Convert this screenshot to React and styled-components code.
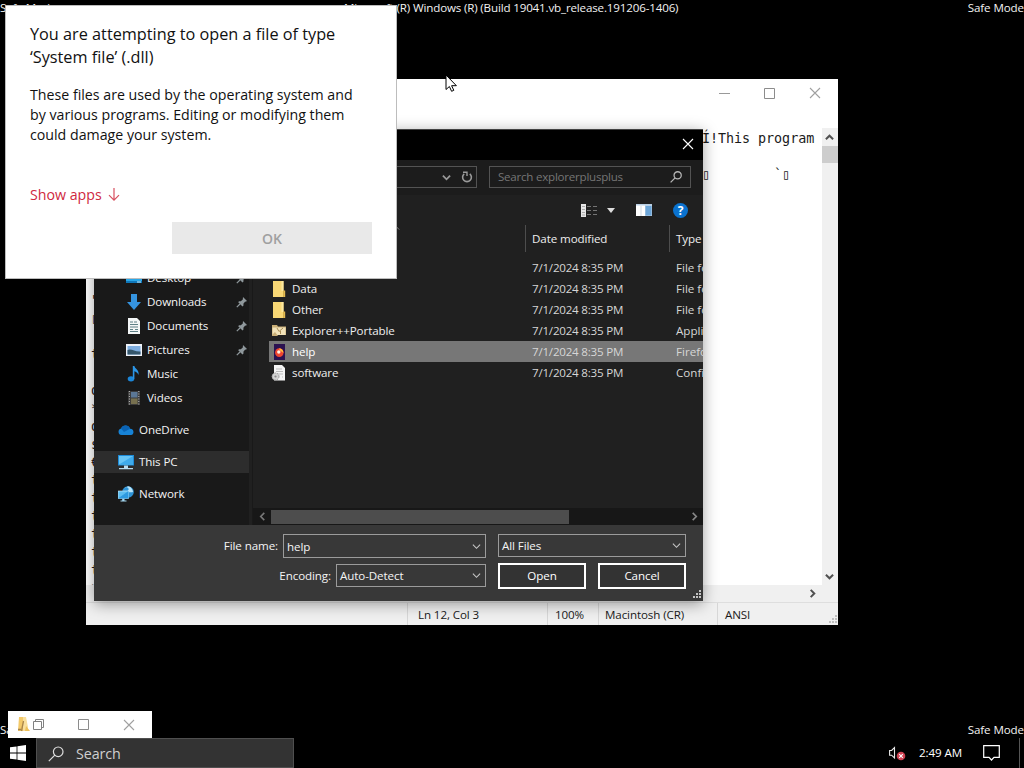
import styled, { createGlobalStyle } from 'styled-components';

const GlobalStyle = createGlobalStyle`
  * {
    box-sizing: border-box;
  }

  body {
    margin: 0;
    background: #000;
    font-family: 'Open Sans', 'Noto Sans', sans-serif;
    font-size: 11.6px;
    line-height: 16px;
    letter-spacing: -0.1px;
    overflow: hidden;
  }

  svg {
    display: block;
    flex: none;
  }
`;

const FILES = [
  { name: 'App', type: 'File folder', icon: 'folder' },
  { name: 'Data', type: 'File folder', icon: 'folder' },
  { name: 'Other', type: 'File folder', icon: 'folder' },
  { name: 'Explorer++Portable', type: 'Application', icon: 'portable' },
  { name: 'help', type: 'Firefox HTML', icon: 'firefox', selected: true },
  { name: 'software', type: 'Configuration', icon: 'config' },
];

const QUICK_ACCESS = [
  { name: 'Desktop', icon: 'desktop', pinned: true },
  { name: 'Downloads', icon: 'downloads', pinned: true },
  { name: 'Documents', icon: 'documents', pinned: true },
  { name: 'Pictures', icon: 'pictures', pinned: true },
  { name: 'Music', icon: 'music' },
  { name: 'Videos', icon: 'videos' },
];

const ROOTS = [
  { name: 'OneDrive', icon: 'onedrive' },
  { name: 'This PC', icon: 'pc', active: true },
  { name: 'Network', icon: 'network' },
];

// line starts and line ends of the opened binary, either side of the dialog
const LINE_STARTS = [
  '', '', '', '', '', '', '', '', '`', '"', '▯', '', 't', '', 'd', '*', 'd', 's', '€',
  't', 't', 't', 't', 't', 't', '*',
];
const LINE_ENDS = ['Í!This program', '', '▯        `▯'];

/* ---------- icons ---------- */

const ICONS = {
  folder: (
    <svg width="16" height="16" viewBox="0 0 16 16">
      <path d="M2 0h10.5v16H2z" fill="#f8d775" />
      <path d="M10.5 0h2v10h-2z" fill="#fde9a0" />
      <path d="M12.2 9.5h2V16h-2z" fill="#e5bb4f" />
    </svg>
  ),
  portable: (
    <svg width="16" height="16" viewBox="0 0 16 16">
      <path d="M1 2h5l1 1.500h8V12H1z" fill="#c9ae76" />
      <path d="M1.500 4.500h13V12h-13z" fill="#f1e2b9" />
      <path d="M6 5l2 3.500L12 5M9.500 8v3" stroke="#a88d58" fill="none" />
      <path d="M1 12l3-3 3 4H1z" fill="#c9ae76" />
    </svg>
  ),
  firefox: (
    <svg width="16" height="16" viewBox="0 0 16 16">
      <path d="M3 0h11v16H3z" fill="#2b1150" />
      <circle cx="8.3" cy="8.6" r="4.3" fill="#f0442f" />
      <path d="M8 4.5c2.5-.4 4.8 2 4.3 4.6C11 7 9 7.5 8 4.5z" fill="#ffbd3d" />
      <circle cx="7.8" cy="8" r="1.7" fill="#fff1e6" />
    </svg>
  ),
  config: (
    <svg width="16" height="16" viewBox="0 0 16 16">
      <path d="M3 0h8l3 3v12.500H3z" fill="#f4f4f4" />
      <path d="M5 4h6M5 6.5h7M5 9h7M11 12h1" stroke="#bbb" />
      <circle cx="4.500" cy="11.500" r="3.500" fill="#d2d2d2" stroke="#999" strokeDasharray="1.5 1" />
      <circle cx="4.500" cy="11.500" r="1.1" fill="#888" />
    </svg>
  ),
  desktop: (
    <svg width="16" height="16" viewBox="0 0 16 16">
      <path d="M0 2h16v11H0z" fill="#2aa7e8" />
      <path d="M0 11h16v2H0z" fill="#0f76b8" />
      <path d="M11 12h4" stroke="#cdefff" />
    </svg>
  ),
  downloads: (
    <svg width="16" height="16" viewBox="0 0 16 16">
      <path d="M5 0h6v8h4l-7 8-7-8h4z" fill="#3594e0" />
    </svg>
  ),
  documents: (
    <svg width="16" height="16" viewBox="0 0 16 16">
      <path d="M2 0h9l3 3v13H2z" fill="#f3f6f7" />
      <path d="M4 4h3M8 4h3M4 6.5h8M4 9h8M4 11.5h3M9 11.5h3M4 13.5h8" stroke="#5e7f86" />
    </svg>
  ),
  pictures: (
    <svg width="16" height="16" viewBox="0 0 16 16">
      <path d="M0 2h16v12H0z" fill="#eef2f8" />
      <path d="M1.5 4h13v8.5h-13z" fill="#7eaee0" />
      <path d="M1.5 8c4-2 7 2 13 1.5v3h-13z" fill="#35566b" />
    </svg>
  ),
  music: (
    <svg width="16" height="16" viewBox="0 0 16 16">
      <ellipse cx="5" cy="12.8" rx="3.3" ry="2.6" fill="#1c86d8" />
      <path d="M6.8 0h1.6c.4 3 5.4 4 4 9-.6-2.4-2.4-3.4-4-3.8v7.6H6.8z" fill="#2b95e6" />
    </svg>
  ),
  videos: (
    <svg width="16" height="16" viewBox="0 0 16 16">
      <path d="M2 1h12v14H2z" fill="#3c3c3c" />
      <path d="M5 2h6.5v5.5H5z" fill="#5b7795" />
      <path d="M5 8.5h6.5V14H5z" fill="#77704f" />
      <path d="M3.4 1v14M12.8 1v14" stroke="#bbb" strokeDasharray="1 1.5" />
    </svg>
  ),
  onedrive: (
    <svg width="16" height="16" viewBox="0 0 16 16">
      <path d="M3.5 13a3.3 3.3 0 0 1-.4-6.5A4.8 4.8 0 0 1 12 6.7a3.2 3.2 0 0 1 1 6.3z" fill="#1783d6" />
      <path d="M3 6.6A4.8 4.8 0 0 1 12 6.7L6 10z" fill="#0a63b4" />
    </svg>
  ),
  pc: (
    <svg width="16" height="16" viewBox="0 0 16 16">
      <path d="M0 1h16v10.5H0z" fill="#1d8bd8" />
      <path d="M1 2h14v8.5H1z" fill="#69c5f5" />
      <path d="M1 10.5 15 2v8.5z" fill="#3fabec" />
      <path d="M6 11.5h4V14H6zM1 14h14v1.3H1z" fill="#b8dcf0" />
    </svg>
  ),
  network: (
    <svg width="16" height="16" viewBox="0 0 16 16">
      <circle cx="10" cy="6" r="5.8" fill="#2d93d6" />
      <path d="M6 2.5c3-3 6 0 4 2s3 2 5 1.5C15 3 12 0 10 .2z" fill="#b9e4f8" />
      <path d="M0 5h10.5v7.5H0z" fill="#5cbdf0" stroke="#d7f1fc" strokeWidth=".6" />
      <path d="M4.2 12.5h2.3V15H4.2zM2.5 14.5h6v1h-6z" fill="#a5d9f3" />
      <path d="M0 12.5 10.5 5v7.5z" fill="#2e9ae0" />
    </svg>
  ),
};

const PinIcon = (
  <svg width="12" height="12" viewBox="0 0 12 12">
    <path d="M7 1l4 4-1 .6-1 .2-1.6 2 .1 1.8-1 .8L2.200 6.200l.8-1 1.800.1 2-1.700.1-1.600z" fill="#8f989c" />
    <path d="M4 8 .8 11.200" stroke="#8f989c" strokeWidth="1.200" />
  </svg>
);

const Chevron = ({ dir = 'down', size = 9, width = 1.2, color = '#c8c8c8' }) => {
  const paths = {
    down: 'M1 3l4 4 4-4',
    up: 'M1 7l4-4 4 4',
    left: 'M7 1L3 5l4 4',
    right: 'M3 1l4 4-4 4',
  };
  return (
    <svg width={size} height={size} viewBox="0 0 10 10">
      <path d={paths[dir]} fill="none" stroke={color} strokeWidth={width} />
    </svg>
  );
};

const CloseIcon = ({ color = '#a0a0a0', size = 12 }) => (
  <svg width={size} height={size} viewBox="0 0 12 12">
    <path d="M1 1l10 10M11 1L1 11" stroke={color} strokeWidth="1.1" />
  </svg>
);

const MaximizeIcon = (
  <svg width="11" height="11" viewBox="0 0 11 11">
    <path d="M.5.5h10v10H.5z" fill="none" stroke="#8c8c8c" />
  </svg>
);

const MinimizeIcon = (
  <svg width="11" height="11" viewBox="0 0 11 11">
    <path d="M0 5.500h11" stroke="#999" />
  </svg>
);

const RestoreIcon = (
  <svg width="11" height="11" viewBox="0 0 11 11">
    <path d="M.5 2.500h8v8h-8zM2.500 2.500v-2h8v8h-2" fill="none" stroke="#808080" />
  </svg>
);

const RefreshIcon = (
  <svg width="12" height="12" viewBox="0 0 12 12">
    <path d="M3.200 2.800A4.400 4.400 0 1 0 8.800 2.800" fill="none" stroke="#999" strokeWidth="1.600" />
    <path d="M2 1.200h4v3.800" fill="none" stroke="#999" strokeWidth="1.400" />
  </svg>
);

const SearchIcon = ({ size, color, width = 1 }) => (
  <svg width={size} height={size} viewBox="0 0 16 16">
    <circle cx="10.200" cy="5.800" r="4.800" fill="none" stroke={color} strokeWidth={width} />
    <path d="M6.800 9.200.8 15.200" stroke={color} strokeWidth={width} />
  </svg>
);

const ViewIcon = (
  <svg width="17" height="13" viewBox="0 0 17 13">
    <path d="M0 0h5v13H0z" fill="#e6e6e6" />
    <path d="M1 2.500h3M1 5.500h3M1 8.500h3M1 11h3" stroke="#aaa" />
    <path d="M6 2.500h4M12 2.500h4M6 6.500h4M12 6.500h4M6 10.500h4M12 10.500h4" stroke="#757575" />
  </svg>
);

const PreviewIcon = (
  <svg width="16" height="12" viewBox="0 0 16 12">
    <path d="M0 0h16v12H0z" fill="#b9cfe4" />
    <path d="M0 1.500h9V12H0z" fill="#fff" />
    <path d="M5 2v10" stroke="#cdd8e2" />
    <path d="M9.500 2h6v9.500h-6z" fill="#6ba5d8" />
  </svg>
);

const Grip = ({ color }) => (
  <svg width="9" height="9" viewBox="0 0 9 9">
    <path d="M7 1h2M4 4h2M7 4h2M1 7h2M4 7h2M7 7h2" stroke={color} strokeWidth="1.8" />
  </svg>
);

const DownArrow = (
  <svg width="12" height="14" viewBox="0 0 12 14">
    <path d="M6 0v12M1 7.200l5 5 5-5" fill="none" stroke="#d8505f" strokeWidth="1.200" />
  </svg>
);

const WindowsLogo = (
  <svg width="16" height="16" viewBox="0 0 16 16">
    <path d="M0 2.300 6.600 1.400v6.200H0zM7.400 1.300 16 0v7.600H7.400zM0 8.400h6.600v6.200L0 13.700zM7.400 8.400H16V16l-8.600-1.300z" fill="#fff" />
  </svg>
);

const SpeakerIcon = (
  <svg width="17" height="16" viewBox="0 0 17 16">
    <path d="M.6 5.500h2L5.500 2.500v10.500L2.600 10.200h-2z" fill="none" stroke="#e8e8e8" strokeWidth="1.100" />
    <circle cx="12" cy="11" r="4.300" fill="#cf4252" />
    <path d="M10.200 9.200l3.600 3.600M13.800 9.200l-3.600 3.600" stroke="#fff" strokeWidth="1.100" />
  </svg>
);

const NotificationIcon = (
  <svg width="17" height="16" viewBox="0 0 17 16">
    <path d="M.7.7h15.600v11.600h-5.300L8.500 15 6 12.300H.7z" fill="none" stroke="#fff" strokeWidth="1.200" />
  </svg>
);

const LauncherIcon = (
  <svg width="13" height="15" viewBox="0 0 13 15">
    <path d="M2 0h4v14H1z" fill="#f3c969" />
    <path d="M6 0h3l2 10v4H6z" fill="#f9df9d" />
    <path d="M4.500 14L6.500 4M1 12.500h3" stroke="#a8844a" strokeWidth="1.300" />
    <path d="M9 9l4 5H8z" fill="#eec15b" />
  </svg>
);

/* ---------- desktop ---------- */

const Desktop = styled.main`
  position: relative;
  width: 1024px;
  height: 768px;
  overflow: hidden;
  background: #000;
  color: #fff;
`;

const Watermark = styled.span`
  position: absolute;
  white-space: nowrap;
  color: #f2f2f2;
  ${({ $bottom }) => ($bottom ? 'top: 722px;' : 'top: 0;')}
  ${({ $side }) => ($side === 'right' ? 'right: 0;' : '')}
  ${({ $side }) => ($side === 'left' ? 'left: 0;' : '')}
  ${({ $side }) => ($side === 'center' ? 'left: 344px; letter-spacing: -0.16px;' : '')}
`;

const Window = styled.section`
  position: absolute;
  display: flex;
  flex-direction: column;
`;

const CaptionButton = styled.span`
  display: flex;
  align-items: center;
  justify-content: center;
  width: ${({ $width }) => $width || 45.5}px;
  height: 28px;
`;

/* ---------- notepad ---------- */

const Notepad = styled(Window)`
  left: 86px;
  top: 79px;
  width: 752px;
  height: 546px;
  background: #fff;
  color: #1a1a1a;
`;

const NotepadTitle = styled.header`
  display: flex;
  justify-content: flex-end;
  height: 49px;
  flex: none;
`;

const Editor = styled.div`
  display: grid;
  grid-template-columns: 1fr 16px;
  grid-template-rows: 1fr 17px;
  height: 474px;
`;

const TextArea = styled.div`
  display: flex;
  justify-content: space-between;
  min-height: 0;
  padding: 2px 0 0 5px;
  overflow: hidden;
`;

const TextBlock = styled.pre`
  width: ${({ $width }) => $width}px;
  margin: 0;
  font: 13.4px/18px 'DejaVu Sans Mono', monospace;
  letter-spacing: -0.05px;
`;

const Track = styled.div`
  display: flex;
  flex-direction: ${({ $row }) => ($row ? 'row' : 'column')};
  justify-content: space-between;
  background: #f0f0f0;
`;

const TrackEnd = styled.span`
  display: flex;
  align-items: center;
  justify-content: center;
  width: 15px;
  height: ${({ $height }) => $height || 18}px;
  margin-right: ${({ $inset }) => $inset || 0}px;
`;

const Thumb = styled.span`
  height: 17px;
  margin-bottom: auto;
  background: #cdcdcd;
`;

const StatusBar = styled.footer`
  display: grid;
  grid-template-columns: 322px 140px 51px 119px 1fr auto;
  height: 23px;
  border-top: 1px solid #dedede;
  background: #f0f0f0;
`;

const StatusCell = styled.span`
  padding: 4px 0 0 ${({ $pad }) => $pad || 7}px;
  border-right: 1px solid #d7d7d7;
  white-space: nowrap;

  &:nth-last-child(-n + 2) {
    border: 0;
  }
`;

const GripCell = styled.span`
  align-self: end;
  padding: 0 1px 1px 0;
`;

/* ---------- file dialog ---------- */

const FileDialog = styled(Window)`
  left: 94px;
  top: 129px;
  width: 609px;
  height: 472px;
  background: #202020;
  color: #f4f4f4;
  border: 0 solid #444;
  border-width: 1px 0 0;
  box-shadow: 0 3px 14px rgba(0, 0, 0, 0.38);
`;

const DialogTitle = styled.header`
  display: flex;
  justify-content: flex-end;
  height: 30px;
  background: #000;
`;

const AddressRow = styled.div`
  display: flex;
  justify-content: flex-end;
  gap: 12px;
  padding: 6px 12px 0 0;
  height: 35px;
  background: #1c1c1c;
`;

const AddressField = styled.div`
  display: flex;
  align-items: center;
  justify-content: flex-end;
  gap: 10px;
  width: 300px;
  height: 22px;
  padding-right: 3px;
  border: 1px solid #535353;
`;

const SearchField = styled(AddressField)`
  justify-content: space-between;
  width: 202px;
  padding: 0 8px;
  color: #757575;
  letter-spacing: -0.25px;
`;

const Toolbar = styled.div`
  display: flex;
  align-items: center;
  justify-content: flex-end;
  height: 30px;
  padding-right: 15px;
  background: #202020;
`;

const DropTriangle = styled.span`
  margin: 0 21px 0 9px;
  border: 4.5px solid transparent;
  border-top: 5px solid #ddd;
  border-bottom: 0;
`;

const HelpBadge = styled.span`
  width: 15px;
  height: 15px;
  margin-left: 21px;
  border-radius: 50%;
  background: #0a72cf;
  color: #fff;
  font-size: 12px;
  font-weight: 700;
  line-height: 15px;
  text-align: center;
`;

const Body = styled.div`
  display: grid;
  grid-template-columns: 155px 1fr;
  height: 300px;
`;

const Nav = styled.nav`
  display: flex;
  flex-direction: column;
  gap: 9px;
  padding-top: 41px;
  background: #191919;
`;

const NavGroup = styled.div`
  display: flex;
  flex-direction: column;
  gap: ${({ $gap }) => $gap || 0}px;
`;

const NavItem = styled.div`
  display: flex;
  align-items: center;
  height: ${({ $root }) => ($root ? 22 : 24)}px;
  padding: 0 1px 0 ${({ $root }) => ($root ? 24 : 32)}px;
  background: ${({ $active }) => ($active ? '#2d2d2d' : 'transparent')};
`;

const NavLabel = styled.span`
  flex: 1;
  margin-left: 5px;
`;

const FilePane = styled.div`
  display: flex;
  flex-direction: column;
  min-width: 0;
  margin-left: 3px;
  border-left: 1px solid #191919;
`;

const FileGrid = styled.div`
  display: grid;
  grid-template-columns: 256px 144px 1fr;
  align-items: center;
  flex: none;
  height: 21px;
  margin-left: 16px;
  overflow: hidden;
  white-space: nowrap;
  background: ${({ $selected }) => ($selected ? '#777' : 'transparent')};
  color: ${({ $selected }) => ($selected ? '#fff' : '#eee')};
`;

const FileHead = styled(FileGrid)`
  grid-template-columns: 257px 144px 1fr;
  height: 27px;
`;

const HeadCell = styled.span`
  position: relative;
  height: 27px;
  padding: 6px 0 0 6px;
  border-right: 1px solid #4d4d4d;

  &:last-child {
    border: 0;
  }
`;

const SortMark = styled.span`
  position: absolute;
  top: -1px;
  left: 123px;
`;

const NameCell = styled.span`
  display: flex;
  align-items: center;
  gap: 5px;
  padding-left: 2px;
`;

const Cell = styled.span`
  padding-left: 7px;
  color: #d6d6d6;
  letter-spacing: ${({ $tight }) => ($tight ? '-0.22px' : '0')};
`;

const ListBody = styled.div`
  flex: 1;
  padding-top: 5px;
`;

const HScroll = styled.div`
  display: grid;
  grid-template-columns: 18px 298px 1fr 18px;
  align-items: center;
  justify-items: center;
  height: 17px;
  background: #171717;
`;

const HThumb = styled.span`
  width: 100%;
  height: 14px;
  background: #4d4d4d;
`;

const DialogFooter = styled.footer`
  display: flex;
  justify-content: flex-end;
  gap: 12px;
  flex: 1;
  padding: 9px 17px 0 0;
  background: #383838;
`;

const FieldColumn = styled.div`
  display: flex;
  flex-direction: column;
  align-items: flex-end;
  gap: 6px;
`;

const Field = styled.label`
  display: flex;
  align-items: center;
  gap: 5px;
`;

const Combo = styled.span`
  display: flex;
  align-items: center;
  justify-content: space-between;
  width: ${({ $width }) => $width}px;
  height: ${({ $height }) => $height || 23}px;
  padding: ${({ $drop }) => $drop || 0}px 4px 0 3px;
  border: 1px solid #9b9b9b;
`;

const ButtonRow = styled.div`
  display: flex;
  gap: 12px;
`;

const DialogButton = styled.button`
  width: 88px;
  height: 26px;
  padding: 0;
  border: 2px solid #fff;
  background: #333;
  color: #fff;
  font: inherit;
  letter-spacing: inherit;
`;

const DialogGrip = styled.span`
  position: absolute;
  right: 2px;
  bottom: 2px;
`;

/* ---------- "file type" prompt ---------- */

const Prompt = styled(Window)`
  left: 5px;
  top: 5px;
  width: 392px;
  height: 274px;
  padding: 17px 24px 24px;
  border: 1px solid #bdbdbd;
  background: #fff;
  color: #111;
  letter-spacing: 0;
`;

const PromptTitle = styled.h1`
  margin: 0;
  font-size: 16.25px;
  font-weight: 400;
  line-height: 23px;
`;

const PromptText = styled.p`
  margin: 16px 0 0;
  font-size: 14.2px;
  line-height: 20px;
`;

const ShowApps = styled.a`
  display: flex;
  align-items: center;
  gap: 6px;
  margin-top: 39px;
  color: #cf2840;
  font-size: 14.2px;
  line-height: 22px;
`;

const OkButton = styled.button`
  align-self: flex-end;
  width: 200px;
  height: 32px;
  margin-top: 16px;
  border: 0;
  background: #e9e9e9;
  color: #a0a0a0;
  font: 600 14px 'Open Sans', sans-serif;
`;

/* ---------- taskbar ---------- */

const MiniWindow = styled.div`
  position: absolute;
  left: 8px;
  top: 711px;
  display: flex;
  align-items: center;
  width: 144px;
  height: 27px;
  padding-left: 9px;
  background: #fff;
`;

const MiniCaption = styled(CaptionButton)`
  width: 46px;
  height: 26px;

  &:nth-child(2) {
    width: 16px;
    margin-right: 14px;
  }
`;

const Taskbar = styled.footer`
  position: absolute;
  left: 0;
  top: 738px;
  display: flex;
  align-items: center;
  width: 1024px;
  height: 30px;
  background: #000;
`;

const StartButton = styled.span`
  display: flex;
  justify-content: center;
  width: 36px;
`;

const SearchBox = styled.div`
  display: flex;
  align-items: center;
  gap: 12px;
  width: 258px;
  height: 30px;
  padding: 1px 0 0 11px;
  border: 1px solid #4f4f4f;
  background: #333;
  color: #cfcfcf;
  font-size: 14.3px;
`;

const Tray = styled.div`
  display: flex;
  align-items: center;
  height: 30px;
  margin-left: auto;
  padding-right: 4px;
`;

const Clock = styled.span`
  margin: 0 21px 0 13px;
`;

const ShowDesktop = styled.span`
  width: 1px;
  height: 30px;
  margin-left: 19px;
  background: #555;
`;

const Cursor = styled.svg`
  position: absolute;
  left: 445px;
  top: 74px;
`;

const NavRow = ({ item, root }) => (
  <NavItem $root={root} $active={item.active}>
    {ICONS[item.icon]}
    <NavLabel>{item.name}</NavLabel>
    {item.pinned && PinIcon}
  </NavItem>
);

const NotepadWindow = () => (
  <Notepad>
    <NotepadTitle>
      <CaptionButton>{MinimizeIcon}</CaptionButton>
      <CaptionButton>{MaximizeIcon}</CaptionButton>
      <CaptionButton><CloseIcon /></CaptionButton>
    </NotepadTitle>
    <Editor>
      <TextArea>
        <TextBlock $width={8}>{LINE_STARTS.join('\n')}</TextBlock>
        <TextBlock $width={120}>{LINE_ENDS.join('\n')}</TextBlock>
      </TextArea>
      <Track>
        <TrackEnd><Chevron dir="up" width={2.2} color="#505050" /></TrackEnd>
        <Thumb />
        <TrackEnd><Chevron width={2.2} color="#505050" /></TrackEnd>
      </Track>
      <Track $row>
        <span />
        <TrackEnd $height={17} $inset={2}><Chevron dir="right" width={2.2} color="#505050" /></TrackEnd>
      </Track>
      <Track />
    </Editor>
    <StatusBar>
      <StatusCell />
      <StatusCell $pad={10}>Ln 12, Col 3</StatusCell>
      <StatusCell>100%</StatusCell>
      <StatusCell $pad={6}>Macintosh (CR)</StatusCell>
      <StatusCell>ANSI</StatusCell>
      <GripCell><Grip color="#bfbfbf" /></GripCell>
    </StatusBar>
  </Notepad>
);

const OpenDialog = () => (
  <FileDialog>
    <DialogTitle>
      <CaptionButton $width={31}><CloseIcon color="#fff" /></CaptionButton>
    </DialogTitle>
    <AddressRow>
      <AddressField>
        <Chevron width={2} color="#999" />
        {RefreshIcon}
      </AddressField>
      <SearchField>
        Search explorerplusplus
        <SearchIcon size={12} color="#b5b5b5" width={1.7} />
      </SearchField>
    </AddressRow>
    <Toolbar>
      {ViewIcon}
      <DropTriangle />
      {PreviewIcon}
      <HelpBadge>?</HelpBadge>
    </Toolbar>
    <Body>
      <Nav>
        <NavGroup>
          {QUICK_ACCESS.map(item => <NavRow key={item.name} item={item} />)}
        </NavGroup>
        <NavGroup $gap={10}>
          {ROOTS.map(item => <NavRow key={item.name} item={item} root />)}
        </NavGroup>
      </Nav>
      <FilePane>
        <FileHead>
          <HeadCell>
            Name
            <SortMark><Chevron dir="up" size={8} color="#8a8a8a" /></SortMark>
          </HeadCell>
          <HeadCell>Date modified</HeadCell>
          <HeadCell>Type</HeadCell>
        </FileHead>
        <ListBody>
          {FILES.map(({ name, type, icon, selected }) => (
            <FileGrid key={name} $selected={selected}>
              <NameCell>{ICONS[icon]}{name}</NameCell>
              <Cell $tight>7/1/2024 8:35 PM</Cell>
              <Cell>{type}</Cell>
            </FileGrid>
          ))}
        </ListBody>
        <HScroll>
          <Chevron dir="left" width={1.8} color="#777" />
          <HThumb />
          <span />
          <Chevron dir="right" width={1.8} color="#888" />
        </HScroll>
      </FilePane>
    </Body>
    <DialogFooter>
      <FieldColumn>
        <Field>
          File name:
          <Combo $width={203} $height={24} $drop={1}>help<Chevron /></Combo>
        </Field>
        <Field>
          Encoding:
          <Combo $width={150}>Auto-Detect<Chevron /></Combo>
        </Field>
      </FieldColumn>
      <FieldColumn>
        <Combo $width={188}>All Files<Chevron /></Combo>
        <ButtonRow>
          <DialogButton>Open</DialogButton>
          <DialogButton>Cancel</DialogButton>
        </ButtonRow>
      </FieldColumn>
    </DialogFooter>
    <DialogGrip><Grip color="#c4c4c4" /></DialogGrip>
  </FileDialog>
);

export default function App() {
  return (
    <>
      <GlobalStyle />
      <Desktop>
        <Watermark $side="left">Safe Mode</Watermark>
        <Watermark $side="center">
          Microsoft (R) Windows (R) (Build 19041.vb_release.191206-1406)
        </Watermark>
        <Watermark $side="right">Safe Mode</Watermark>
        <Watermark $side="left" $bottom>Safe Mode</Watermark>
        <Watermark $side="right" $bottom>Safe Mode</Watermark>

        <NotepadWindow />
        <OpenDialog />

        <Prompt>
          <PromptTitle>
            You are attempting to open a file of type
            <br />
            ‘System file’ (.dll)
          </PromptTitle>
          <PromptText>
            These files are used by the operating system and
            <br />
            by various programs. Editing or modifying them
            <br />
            could damage your system.
          </PromptText>
          <ShowApps>Show apps {DownArrow}</ShowApps>
          <OkButton>OK</OkButton>
        </Prompt>

        <MiniWindow>
          {LauncherIcon}
          <MiniCaption>{RestoreIcon}</MiniCaption>
          <MiniCaption>{MaximizeIcon}</MiniCaption>
          <MiniCaption><CloseIcon /></MiniCaption>
        </MiniWindow>

        <Taskbar>
          <StartButton>{WindowsLogo}</StartButton>
          <SearchBox>
            <SearchIcon size={16} color="#ddd" width={1.2} />
            Search
          </SearchBox>
          <Tray>
            {SpeakerIcon}
            <Clock>2:49 AM</Clock>
            {NotificationIcon}
            <ShowDesktop />
          </Tray>
        </Taskbar>

        <Cursor width="13" height="19" viewBox="0 0 13 19">
          <path d="M1 1v14.500l3.400-3 2.200 4.800 2.200-1-2.200-4.600h4.800z" fill="#fff" stroke="#000" />
        </Cursor>
      </Desktop>
    </>
  );
}
